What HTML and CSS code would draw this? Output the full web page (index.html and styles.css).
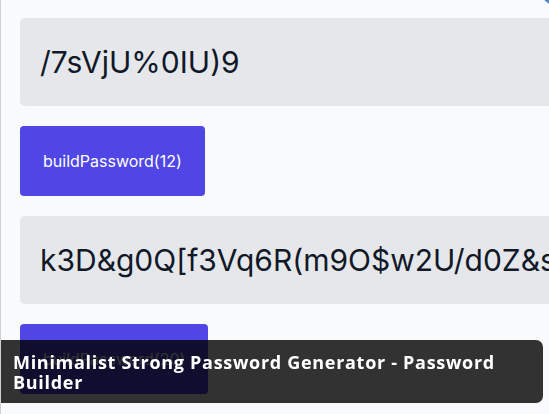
FILE: index.html
```html
<!DOCTYPE html>
<html lang="en">
<head>
<meta charset="utf-8">
<title>Password Builder</title>
<link rel="stylesheet" href="styles.css">
</head>
<body>
<div class="page">
  <span class="corner-dot"></span>
  <section class="generator">
    <div class="output">/7sVjU%0IU)9</div>
    <button class="build">buildPassword(12)</button>
  </section>
  <section class="generator">
    <div class="output">k3D&amp;g0Q[f3Vq6R(m9O$w2U/d0Z&amp;s4T!x8P</div>
    <button class="build">buildPassword(20)</button>
  </section>
</div>
<div class="caption">Minimalist Strong Password Generator - Password Builder</div>
</body>
</html>
```
FILE: styles.css
```css
html, body {
  margin: 0;
  padding: 0;
  height: 100%;
  overflow: hidden;
  background: #f9fafb;
}
.page {
  position: relative;
  height: 100%;
  box-sizing: border-box;
  border-left: 1px solid #d0d0d0;
  padding: 18px 0 0 19px;
  font-family: Inter, "Liberation Sans", sans-serif;
}
.corner-dot {
  position: absolute;
  top: -14px;
  right: -12px;
  width: 18px;
  height: 18px;
  border-radius: 50%;
  background: #4a86d0;
}
.generator {
  display: flex;
  flex-direction: column;
  align-items: flex-start;
  gap: 20px;
  margin-bottom: 20px;
}
.output {
  width: 700px;
  box-sizing: border-box;
  background: #e5e7eb;
  border-radius: 5px;
  padding: 26px 20px;
  font-size: 30px;
  line-height: 36px;
  color: #111827;
  white-space: nowrap;
  overflow: hidden;
}
.build {
  font-family: Inter, "Liberation Sans", sans-serif;
  font-size: 16px;
  line-height: 24px;
  padding: 23px 23px;
  border: none;
  border-radius: 4px;
  background: #4f46e5;
  color: #ffffff;
}
.caption {
  position: fixed;
  left: 1px;
  bottom: 11px;
  width: 542px;
  box-sizing: border-box;
  padding: 12px 30px 11px 12px;
  border-radius: 0 7px 7px 0;
  background: rgba(0, 0, 0, 0.8);
  color: #ffffff;
  font-family: "Open Sans", "Noto Sans", sans-serif;
  font-weight: 700;
  font-size: 18px;
  line-height: 20px;
  letter-spacing: 0.7px;
}
```
